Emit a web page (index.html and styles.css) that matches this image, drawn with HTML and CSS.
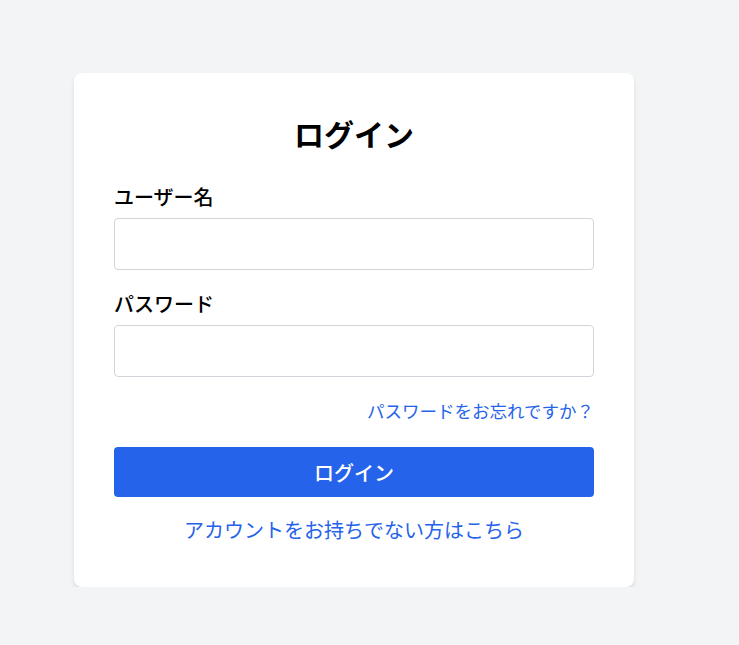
FILE: index.html
```html
<!DOCTYPE html>
<html lang="ja">
<head>
<meta charset="utf-8">
<title>ログイン</title>
<link rel="stylesheet" href="styles.css">
</head>
<body>
<main class="page">
  <form class="card">
    <h1 class="title">ログイン</h1>
    <div class="field">
      <label class="label" for="username">ユーザー名</label>
      <input class="input" id="username" type="text">
    </div>
    <div class="field">
      <label class="label" for="password">パスワード</label>
      <input class="input" id="password" type="password">
    </div>
    <div class="forgot-row">
      <a class="link forgot" href="#">パスワードをお忘れですか？</a>
    </div>
    <button class="btn" type="button">ログイン</button>
    <div class="signup-row">
      <a class="link signup" href="#">アカウントをお持ちでない方はこちら</a>
    </div>
  </form>
</main>
</body>
</html>
```

FILE: styles.css
```css
* { box-sizing: border-box; }
html, body {
  margin: 0;
  padding: 0;
  background: #f3f4f6;
  font-family: "Noto Sans CJK JP", "Noto Sans", sans-serif;
  color: #111;
}
.page {
  padding: 73px 0 0 74px;
}
.card {
  width: 560px;
  background: #fff;
  border-radius: 8px;
  box-shadow: 0 4px 6px -1px rgba(0,0,0,0.1), 0 2px 4px -1px rgba(0,0,0,0.06);
  padding: 40px 40px 42px;
  display: flex;
  flex-direction: column;
}
.title {
  margin: 0 0 30px;
  font-size: 30px;
  line-height: 40px;
  font-weight: 700;
  text-align: center;
  color: #000;
}
.field {
  display: flex;
  flex-direction: column;
  margin-bottom: 20px;
}
.label {
  font-size: 20px;
  line-height: 28px;
  font-weight: 500;
  margin-bottom: 7px;
  color: #000;
}
.input {
  height: 52px;
  border: 1px solid #d1d5db;
  border-radius: 4px;
  background: #fff;
  font-size: 16px;
  padding: 0 12px;
}
.forgot-row {
  text-align: right;
  margin-top: 1px;
  margin-bottom: 23px;
}
.link {
  color: #2563eb;
  text-decoration: none;
}
.forgot {
  font-size: 17.5px;
  line-height: 26px;
}
.btn {
  height: 50px;
  border: 0;
  border-radius: 4px;
  background: #2563eb;
  color: #fff;
  font-family: inherit;
  font-size: 20px;
  font-weight: 500;
}
.signup-row {
  text-align: center;
  margin-top: 18px;
}
.signup {
  font-size: 20px;
  line-height: 30px;
}
```
